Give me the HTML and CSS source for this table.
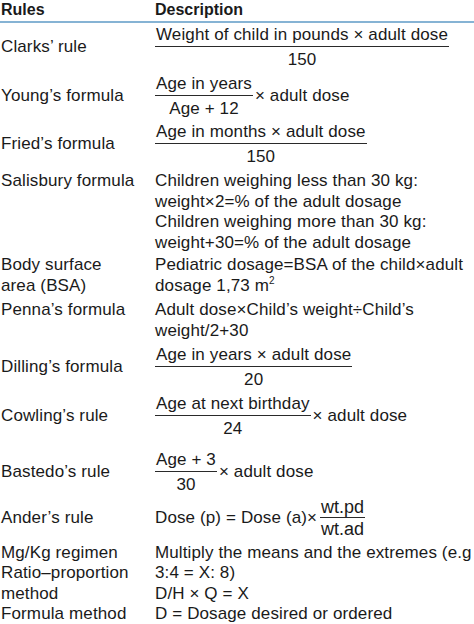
FILE: index.html
```html
<!DOCTYPE html>
<html>
<head>
<meta charset="utf-8">
<link rel="stylesheet" href="styles.css">
</head>
<body>
<div class="table">
  <div class="row head">
    <div class="rule">Rules</div>
    <div class="desc">Description</div>
  </div>

  <div class="row h-clarks">
    <div class="rule">Clarks’ rule</div>
    <div class="desc">
      <span class="frac"><span class="num">Weight of child in pounds × adult dose</span><span class="den">150</span></span>
    </div>
  </div>

  <div class="row h-young">
    <div class="rule">Young’s formula</div>
    <div class="desc expr">
      <span class="frac"><span class="num">Age in years</span><span class="den">Age + 12</span></span><span class="after">× adult dose</span>
    </div>
  </div>

  <div class="row h-fried">
    <div class="rule">Fried’s formula</div>
    <div class="desc">
      <span class="frac"><span class="num">Age in months × adult dose</span><span class="den">150</span></span>
    </div>
  </div>

  <div class="row multi h-salis">
    <div class="rule">Salisbury formula</div>
    <div class="desc lines">
      <div>Children weighing less than 30 kg:</div>
      <div>weight×2=% of the adult dosage</div>
      <div>Children weighing more than 30 kg:</div>
      <div>weight+30=% of the adult dosage</div>
    </div>
  </div>

  <div class="row multi h-bsa">
    <div class="rule lines"><div>Body surface</div><div>area (BSA)</div></div>
    <div class="desc lines">
      <div>Pediatric dosage=BSA of the child×adult</div>
      <div>dosage 1,73 m<sup>2</sup></div>
    </div>
  </div>

  <div class="row multi h-penna">
    <div class="rule">Penna’s formula</div>
    <div class="desc lines">
      <div>Adult dose×Child’s weight÷Child’s</div>
      <div>weight/2+30</div>
    </div>
  </div>

  <div class="row h-dilling">
    <div class="rule">Dilling’s formula</div>
    <div class="desc">
      <span class="frac"><span class="num">Age in years × adult dose</span><span class="den">20</span></span>
    </div>
  </div>

  <div class="row h-cowling">
    <div class="rule">Cowling’s rule</div>
    <div class="desc expr">
      <span class="frac"><span class="num">Age at next birthday</span><span class="den">24</span></span><span class="after">× adult dose</span>
    </div>
  </div>

  <div class="row h-bastedo">
    <div class="rule">Bastedo’s rule</div>
    <div class="desc expr">
      <span class="frac"><span class="num">Age + 3</span><span class="den">30</span></span><span class="after">× adult dose</span>
    </div>
  </div>

  <div class="row h-ander">
    <div class="rule">Ander’s rule</div>
    <div class="desc expr ander">
      <span class="pre">Dose (p) = Dose (a)×</span><span class="frac small"><span class="num">wt.pd</span><span class="den">wt.ad</span></span>
    </div>
  </div>

  <div class="row line">
    <div class="rule">Mg/Kg regimen</div>
    <div class="desc">Multiply the means and the extremes (e.g</div>
  </div>
  <div class="row line">
    <div class="rule">Ratio–proportion</div>
    <div class="desc">3:4 = X: 8)</div>
  </div>
  <div class="row line">
    <div class="rule">method</div>
    <div class="desc">D/H × Q = X</div>
  </div>
  <div class="row line">
    <div class="rule">Formula method</div>
    <div class="desc">D = Dosage desired or ordered</div>
  </div>
</div>
</body>
</html>
```

FILE: styles.css
```css
html, body {
  margin: 0;
  padding: 0;
  background: #ffffff;
  overflow: hidden;
}

body {
  width: 474px;
  height: 624px;
  font-family: "Liberation Sans", Arial, sans-serif;
  font-size: 17px;
  letter-spacing: 0.12px;
  color: #1a1a1a;
}

.table {
  display: flex;
  flex-direction: column;
}

.row {
  display: flex;
  align-items: center;
  white-space: nowrap;
}

.rule {
  width: 155px;
  flex: 0 0 155px;
  box-sizing: border-box;
  padding-left: 1px;
  line-height: 20.5px;
}

.desc {
  flex: 1;
  line-height: 20.5px;
}

.head {
  height: 21px;
  border-bottom: 2px solid #86b3d4;
  font-weight: bold;
  font-size: 16px;
  letter-spacing: 0;
}

.h-clarks { height: 49px; }
.h-young { height: 49px; }
.h-fried { height: 47px; }
.h-salis { height: 85px; padding-top: 3px; box-sizing: border-box; }
.h-bsa { height: 43px; padding-top: 2px; box-sizing: border-box; }
.h-penna { height: 45px; padding-top: 4px; box-sizing: border-box; }
.h-dilling { height: 52px; }
.h-cowling { height: 47px; }
.h-bastedo { height: 64px; }
.h-ander { height: 28px; margin-bottom: 10.5px; }
.line { height: 20.5px; }

.multi {
  align-items: flex-start;
}

.lines > div {
  line-height: 20.5px;
}

sup {
  font-size: 10px;
  vertical-align: 7px;
  line-height: 0;
}

.expr {
  display: flex;
  align-items: center;
}

.frac {
  display: inline-flex;
  flex-direction: column;
  align-items: center;
  vertical-align: middle;
}

.num {
  display: block;
  line-height: 22px;
  padding: 0 1px;
  border-bottom: 1.6px solid #2a2a2a;
}

.den {
  display: block;
  line-height: 22px;
  padding-top: 2px;
}

.after {
  padding-left: 2px;
}

.frac.small {
  margin-left: 3px;
  font-size: 18px;
  letter-spacing: 0;
}

.frac.small .num {
  line-height: 20px;
}

.frac.small .den {
  line-height: 20px;
  padding-top: 1px;
}
```
